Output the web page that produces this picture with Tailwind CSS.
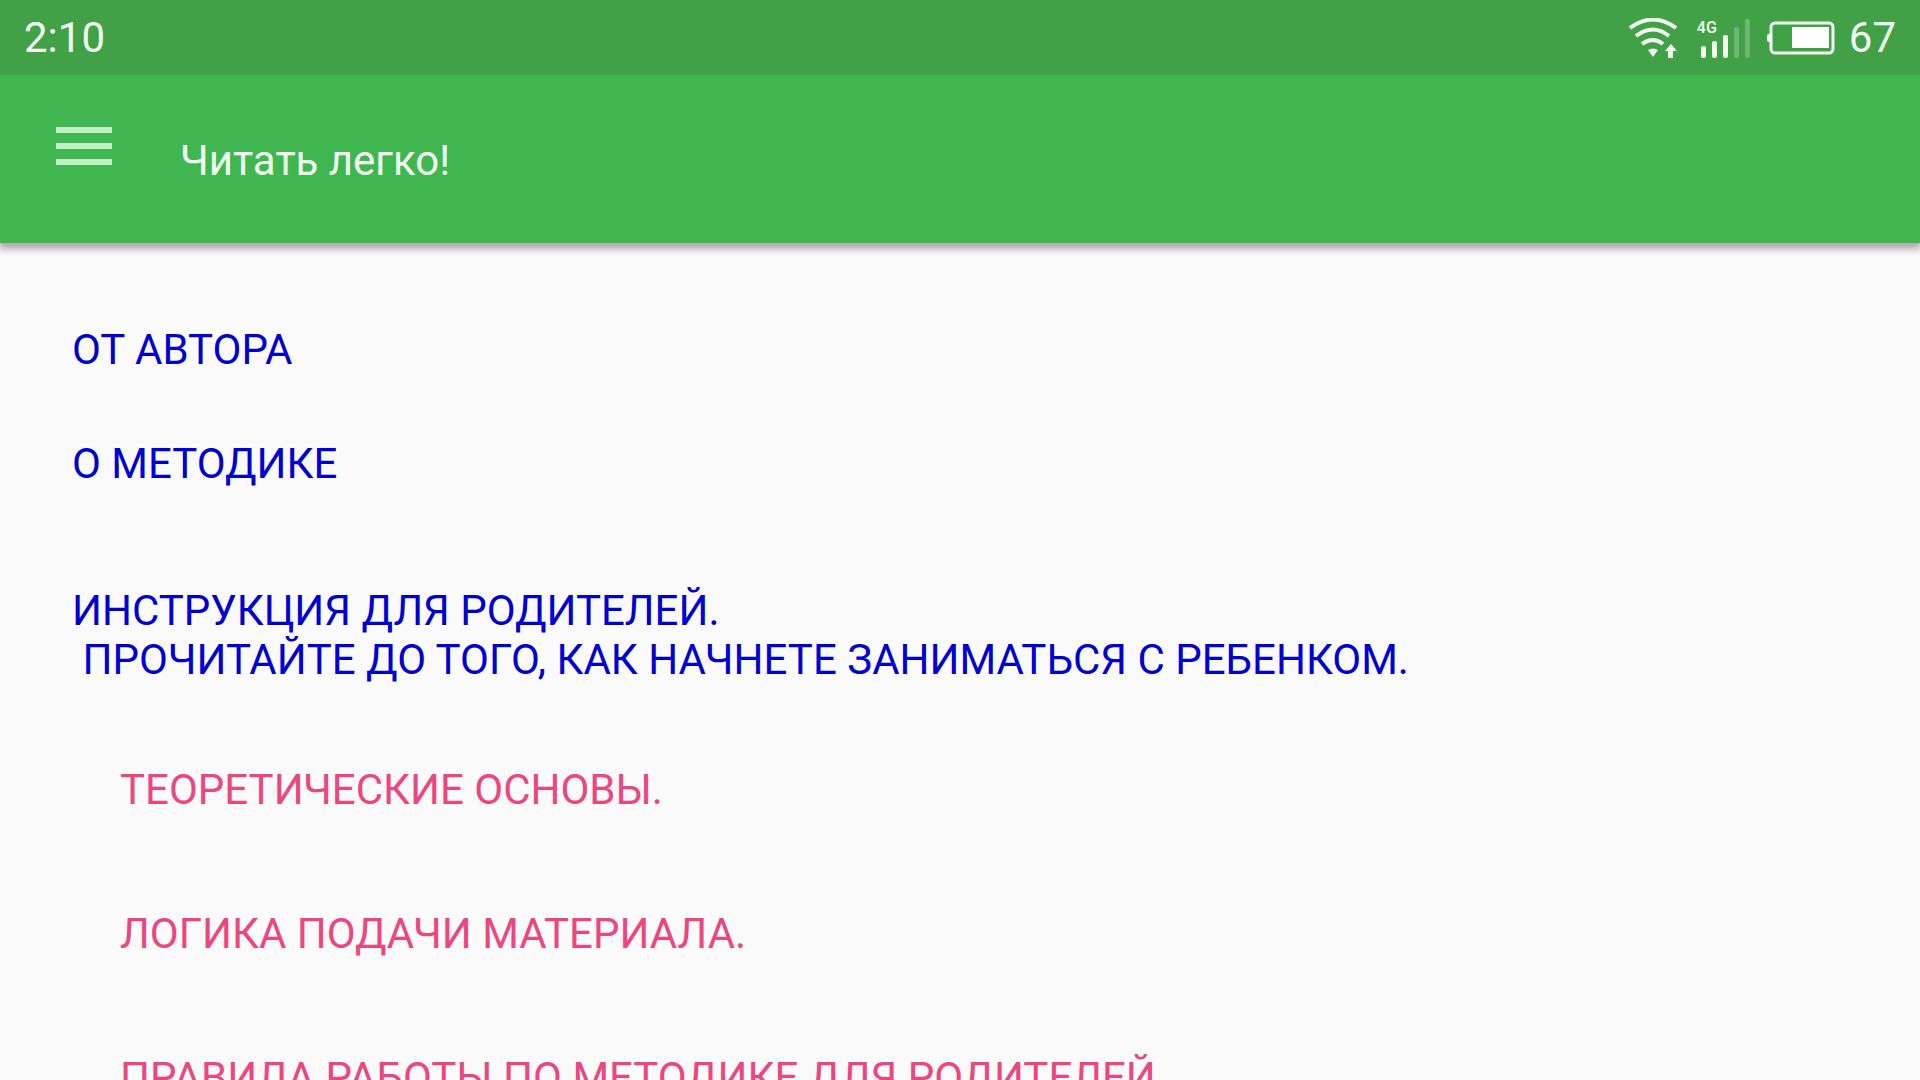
<!DOCTYPE html>
<html lang="ru">
<head>
<meta charset="utf-8">
<meta name="viewport" content="width=device-width, initial-scale=1">
<title>Читать легко!</title>
<script src="https://cdn.jsdelivr.net/npm/@tailwindcss/browser@4"></script>
</head>
<body class="flex h-screen flex-col overflow-hidden bg-[#fafafa] font-[Roboto,sans-serif] text-[42px] leading-[49px]">
  <!-- Status bar -->
  <div class="relative z-10 flex h-[75px] shrink-0 items-center justify-between bg-[#42a046] px-6 text-[#f0fff0]">
    <time>2:10</time>
    <div class="flex items-center">
      <svg class="mr-5 h-10 w-12" viewBox="0 0 48 40" fill="none" stroke="#f0fff0" stroke-width="4" role="img" aria-label="Wi-Fi">
        <path d="M1 10Q24 -7 47 10"/>
        <path d="M7 18Q24 5 40 18"/>
        <path d="M13 26Q24 18 34 26"/>
        <path d="M19 32Q24 29 29 32L24 39Z" fill="#f0fff0" stroke="none"/>
        <path d="M42 26L48 33H44V40H39V33H36Z" fill="#f0fff0" stroke="none"/>
      </svg>
      <div class="relative mr-[17px] h-10 w-[53px]">
        <svg class="h-10 w-[53px]" viewBox="0 0 53 40" fill="#f0fff0" role="img" aria-label="Signal">
          <rect x="4" y="28" width="5" height="12" rx="2"/>
          <rect x="15" y="23" width="5" height="17" rx="2"/>
          <rect x="26" y="17" width="5" height="23" rx="2"/>
          <rect x="37" y="9" width="5" height="31" rx="2" opacity=".25"/>
          <rect x="48" y="1" width="5" height="39" rx="2" opacity=".25"/>
        </svg>
        <span class="absolute top-0 left-0 text-base leading-5 font-medium">4G</span>
      </div>
      <svg class="mr-[14px] h-[34px] w-[68px]" viewBox="0 0 68 34" fill="#f0fff0" role="img" aria-label="Battery">
        <rect x="4" y="2" width="62" height="30" rx="4" fill="none" stroke="#f0fff0" stroke-width="3"/>
        <rect x="0" y="13" width="4" height="8" rx="2"/>
        <rect x="25" y="6" width="37" height="21" fill="#fff"/>
      </svg>
      <span>67</span>
    </div>
  </div>

  <!-- App bar -->
  <header class="flex h-[168px] shrink-0 items-start bg-[#3fb64f] pl-14 text-[#f0fff0] shadow-[0_5px_7px_1px_rgba(60,40,60,0.4)]">
    <button type="button" aria-label="Меню" class="mt-[52px] flex flex-col gap-[10px]">
      <span class="h-[6px] w-14 bg-[#c0f0c4]"></span>
      <span class="h-[6px] w-14 bg-[#c0f0c4]"></span>
      <span class="h-[6px] w-14 bg-[#c0f0c4]"></span>
    </button>
    <h1 class="mt-[61px] ml-[68px]">Читать легко!</h1>
  </header>

  <!-- Contents -->
  <main class="px-[72px] pt-[82px] text-[#0000d0]">
    <nav class="flex flex-col items-start">
      <a href="#author">ОТ АВТОРА</a>
      <a href="#method" class="mt-[65px]">О МЕТОДИКЕ</a>
      <a href="#parents" class="mt-[98px]">ИНСТРУКЦИЯ ДЛЯ РОДИТЕЛЕЙ.<br>&nbsp;ПРОЧИТАЙТЕ ДО ТОГО, КАК НАЧНЕТЕ ЗАНИМАТЬСЯ С РЕБЕНКОМ.</a>
      <div class="mt-[81px] flex flex-col items-start gap-[95px] pl-12 text-[#ec4680]">
        <a href="#theory">ТЕОРЕТИЧЕСКИЕ ОСНОВЫ.</a>
        <a href="#logic">ЛОГИКА ПОДАЧИ МАТЕРИАЛА.</a>
        <a href="#rules">ПРАВИЛА РАБОТЫ ПО МЕТОДИКЕ ДЛЯ РОДИТЕЛЕЙ</a>
      </div>
    </nav>
  </main>
</body>
</html>
